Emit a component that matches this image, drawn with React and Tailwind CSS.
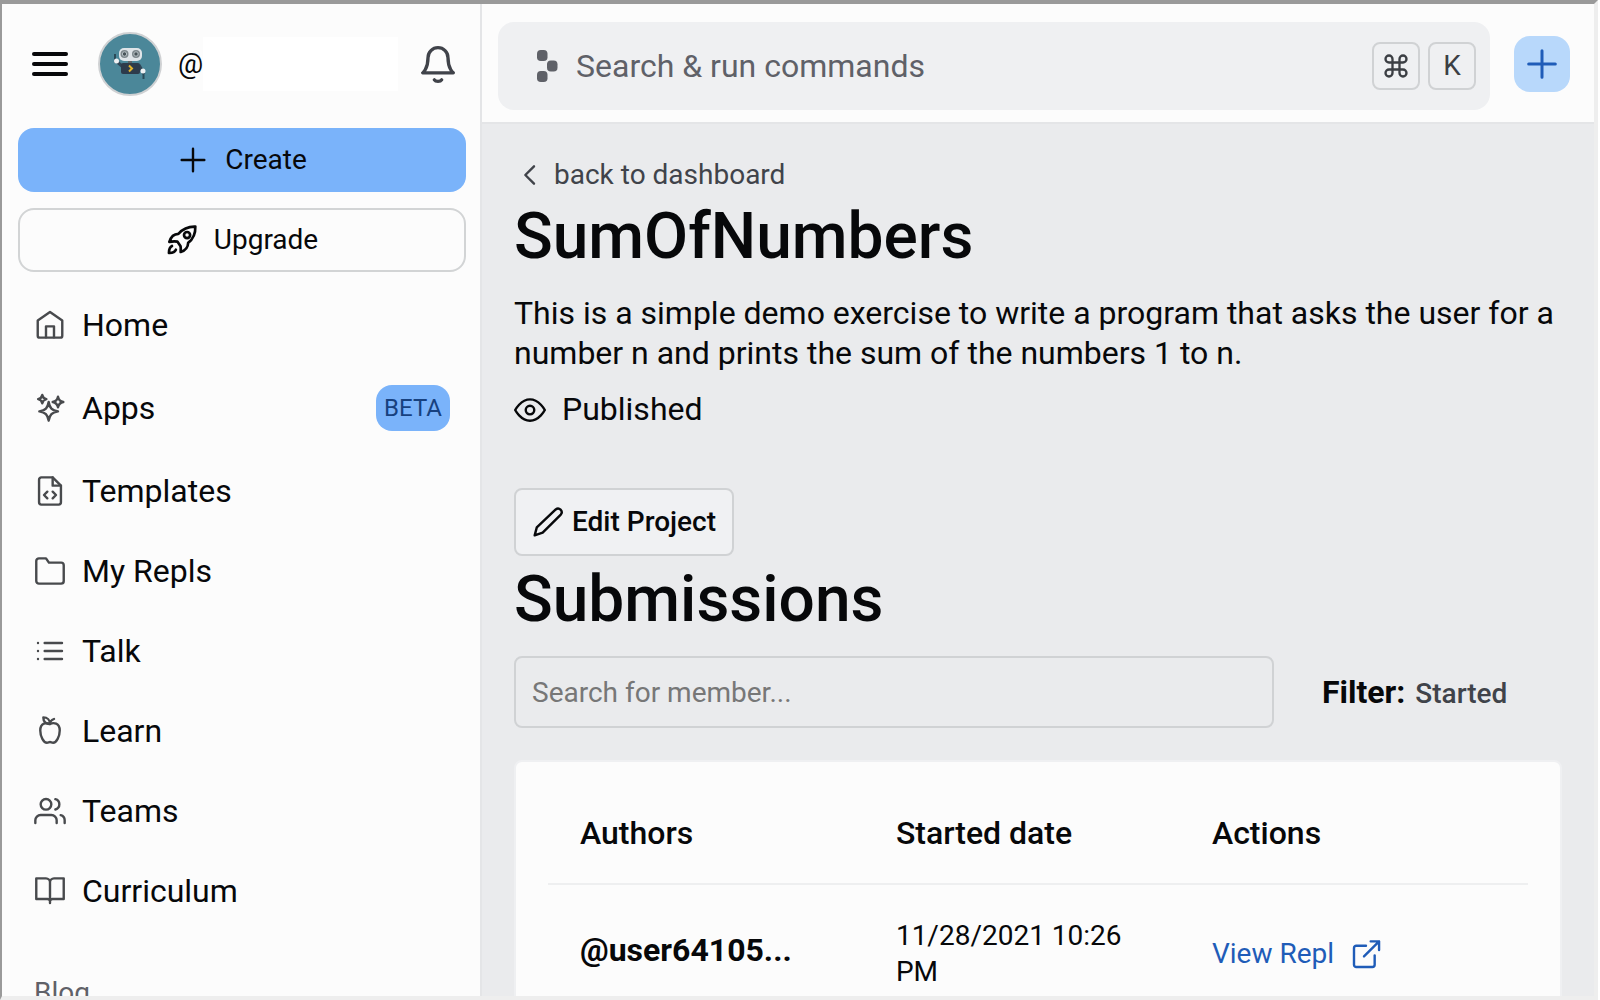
import React from "react";

function Icon({ children, className = "size-8", width = 1.8 }) {
  return (
    <svg
      viewBox="0 0 24 24"
      fill="none"
      stroke="currentColor"
      strokeWidth={width}
      strokeLinecap="round"
      strokeLinejoin="round"
      aria-hidden="true"
      className={`shrink-0 ${className}`}
    >
      {children}
    </svg>
  );
}

const navItems = [
  {
    label: "Home",
    icon: (
      <>
        <path d="M2.800 8.600L12 2.200l9.200 6.400V20a1.500 1.500 0 0 1-1.500 1.500H4.300A1.500 1.500 0 0 1 2.800 20z" />
        <path d="M9 21.200V13h6v8.200" />
      </>
    ),
  },
  {
    label: "Apps",
    badge: "BETA",
    icon: (
      <>
        <path d="M11 7.500c.8 4.600 2.400 6.200 7 7-4.600.8-6.200 2.400-7 7-.8-4.600-2.400-6.200-7-7 4.600-.8 6.200-2.400 7-7z" />
        <path d="M6.200 2.200c.4 2 1.100 2.700 3.100 3.100-2 .4-2.700 1.100-3.100 3.100-.4-2-1.100-2.700-3.100-3.100 2-.4 2.700-1.100 3.100-3.100z" />
        <path d="M18 3.500c.5 2.600 1.400 3.500 4 4-2.600.5-3.500 1.400-4 4-.5-2.600-1.400-3.500-4-4 2.600-.5 3.500-1.400 4-4z" />
      </>
    ),
  },
  {
    label: "Templates",
    icon: (
      <>
        <path d="M14 1.800H5.500A1.700 1.700 0 0 0 3.800 3.500v17a1.700 1.700 0 0 0 1.700 1.700h13a1.700 1.700 0 0 0 1.700-1.700V8z" />
        <path d="M14 1.800V8h6.200M10 12.500L7.500 15l2.500 2.500M14 12.500l2.500 2.500-2.500 2.500" />
      </>
    ),
  },
  {
    label: "My Repls",
    icon: (
      <path d="M22.300 19.500a2 2 0 0 1-2 2H3.700a2 2 0 0 1-2-2v-15a2 2 0 0 1 2-2H9l2.200 3.200h9.100a2 2 0 0 1 2 2z" />
    ),
  },
  {
    label: "Talk",
    icon: <path d="M8 6h13M8 12h13M8 18h13M3 6h.01M3 12h.01M3 18h.01" />,
  },
  {
    label: "Learn",
    icon: (
      <>
        <path d="M12 6.800C9.500 5.400 4.700 5.900 4.700 11.600c0 4.500 2.500 9.200 5 9.200 1 0 1.500-.5 2.300-.5s1.300.5 2.300.5c2.500 0 5-4.700 5-9.200 0-5.700-4.800-6.200-7.300-4.800z" />
        <path d="M12 6.800C9 7 7 5 7 1.800c3 0 5 2 5 5zM12 6.800c0-1.500 1.400-3.200 3-3.800" />
      </>
    ),
  },
  {
    label: "Teams",
    icon: (
      <>
        <path d="M17 21v-2a4 4 0 0 0-4-4H5a4 4 0 0 0-4 4v2M23 21v-2a4 4 0 0 0-3-3.870M16 3.130a4 4 0 0 1 0 7.750" />
        <circle cx="9" cy="7" r="4" />
      </>
    ),
  },
  {
    label: "Curriculum",
    icon: (
      <path d="M12 5.500a3 3 0 0 0-3-3H1.700V18H10a2 2 0 0 1 2 2.500M12 5.500a3 3 0 0 1 3-3h7.300V18H14a2 2 0 0 0-2 2.500M12 5.500V21" />
    ),
  },
];

const submissions = [{ author: "@user64105...", date: "11/28/2021 10:26 PM" }];

function Avatar() {
  return (
    <svg viewBox="0 0 64 64" className="size-16 shrink-0" role="img" aria-label="Robot avatar">
      <circle cx="32" cy="32" r="31" fill="#4b8799" stroke="#cfd1d3" strokeWidth="2" />
      <path d="M17 22v9" stroke="#2b4a58" strokeWidth="2" />
      <path d="M17 28l8 7M41 33l5 9" stroke="#2f4556" strokeWidth="3" />
      <path d="M45.500 40v7" stroke="#2b4a58" strokeWidth="2" />
      <circle cx="18.500" cy="29" r="2.500" fill="#eef1f3" />
      <circle cx="45" cy="39" r="2.500" fill="#eef1f3" />
      <rect x="30" y="27" width="4" height="5" fill="#5b6468" />
      <rect x="21" y="16" width="23" height="13" rx="5" fill="#dfe4e8" />
      <circle cx="26.500" cy="22" r="4" fill="#7d878c" />
      <circle cx="38" cy="22" r="4" fill="#7d878c" />
      <circle cx="26.500" cy="22" r="2.200" fill="#475258" stroke="#b9c2c6" strokeWidth="1" />
      <circle cx="38" cy="22" r="2.200" fill="#475258" stroke="#b9c2c6" strokeWidth="1" />
      <rect x="23" y="31" width="19" height="11" rx="2" fill="#2d3b4b" />
      <path d="M31 33.500l3 3-3 3" fill="none" stroke="#e3b52c" strokeWidth="2" />
    </svg>
  );
}

function Sidebar() {
  return (
    <aside className="flex w-[480px] shrink-0 flex-col border-r-2 border-[#e4e5e7] bg-[#fcfcfc]">
      <div className="flex h-[120px] shrink-0 items-center pr-[22px] pl-[30px]">
        <button type="button" aria-label="Menu" className="flex h-6 w-9 flex-col justify-between">
          <span className="h-1 w-full rounded-full bg-[#07080a]" />
          <span className="h-1 w-full rounded-full bg-[#07080a]" />
          <span className="h-1 w-full rounded-full bg-[#07080a]" />
        </button>
        <div className="ml-[30px] flex">
          <Avatar />
        </div>
        <span className="ml-4 w-[25px] text-[28px]">@</span>
        <span className="h-[54px] flex-1 bg-white" />
        <button type="button" aria-label="Notifications" className="ml-5 text-[#40434a]">
          <Icon className="size-10" width={2}>
            <path d="M12 2.200a6 6 0 0 0-6 6c0 6.700-3.200 9.100-3.200 9.100h18.400S18 14.900 18 8.200a6 6 0 0 0-6-6zM9.800 21.500c.8 1.200 3.600 1.200 4.400 0" />
          </Icon>
        </button>
      </div>
      <div className="flex shrink-0 flex-col gap-4 pt-1 pr-3.5 pl-4">
        <button
          type="button"
          className="flex h-16 items-center justify-center gap-4 rounded-2xl bg-[#7ab3fa] text-[28px]"
        >
          <Icon>
            <path d="M12 3.500v17M3.500 12h17" />
          </Icon>
          Create
        </button>
        <button
          type="button"
          className="flex h-16 items-center justify-center gap-4 rounded-2xl border-2 border-[#d2d4d5] text-[28px]"
        >
          <Icon width={2}>
            <path d="M8.500 13.200c-2-.4-3.800-.3-6 .300 1.200-4 3-6 6.800-6.100C12.500 3.800 16.500 1.800 22 2c.2 5.500-1.800 9.500-5.400 12.200-.1 3.800-2.100 5.600-5.600 6.800.1-2.500.2-3.800-.2-4.500z" />
            <path d="M4.500 16.500c-1.600.8-2.300 2.700-2.300 5.200 2.400.1 4.400-.5 5.200-2.400" />
            <circle cx="15.800" cy="8.300" r="2.300" />
          </Icon>
          Upgrade
        </button>
      </div>
      <nav className="mt-[13px] flex shrink-0 flex-col">
        {navItems.map((item) => (
          <a key={item.label} href="#" className="flex items-center gap-4 py-5 pr-[30px] pl-8 text-[32px] leading-10">
            <span className="flex text-[#484a4d]">
              <Icon>{item.icon}</Icon>
            </span>
            <span className="flex-1">{item.label}</span>
            {item.badge && (
              <span className="flex h-[46px] items-center rounded-2xl bg-[#7ab3fa] px-2 text-2xl text-[#17417f]">
                {item.badge}
              </span>
            )}
          </a>
        ))}
      </nav>
      <a href="#" className="mt-11 shrink-0 px-8 text-[28px] leading-9 text-[#5f6168]">
        Blog
      </a>
    </aside>
  );
}

function Header() {
  return (
    <header className="flex h-[120px] shrink-0 items-start gap-6 border-b-2 border-[#e4e5e7] bg-[#fcfcfc] pt-[18px] pr-6 pl-4">
      <button
        type="button"
        className="flex h-[88px] flex-1 items-center rounded-2xl bg-[#eff0f2] pr-[14px] pl-[38px] text-left text-[#5f6168]"
      >
        <svg viewBox="0 0 24 32" className="h-8 w-6 shrink-0" fill="currentColor" aria-hidden="true">
          <rect x="1" y="0" width="10.500" height="11" rx="3.800" />
          <rect x="11" y="10.500" width="10.500" height="11" rx="3.800" />
          <rect x="1" y="21" width="10.500" height="11" rx="3.800" />
        </svg>
        <span className="ml-4 flex-1 text-[32px]">Search &amp; run commands</span>
        <span className="flex gap-2 text-[28px] text-[#3c3f44]">
          <kbd className="flex size-12 items-center justify-center rounded-lg border-2 border-[#d0d2d4] font-[Roboto]">
            <Icon className="size-7" width={2}>
              <path d="M15 9V6a3 3 0 1 1 3 3H6a3 3 0 1 1 3-3v12a3 3 0 1 1-3-3h12a3 3 0 1 1-3 3z" />
            </Icon>
          </kbd>
          <kbd className="flex size-12 items-center justify-center rounded-lg border-2 border-[#d0d2d4] font-[Roboto]">
            K
          </kbd>
        </span>
      </button>
      <button
        type="button"
        aria-label="New"
        className="mt-3.5 flex size-14 items-center justify-center rounded-2xl bg-[#b8d8fb] text-[#1f5cb8]"
      >
        <Icon className="size-10">
          <path d="M12 4v16M4 12h16" />
        </Icon>
      </button>
    </header>
  );
}

function Project() {
  return (
    <main className="flex min-h-0 flex-1 flex-col overflow-hidden bg-[#eaebed] px-8 pt-[33px]">
      <a href="#" className="flex shrink-0 items-center gap-2 self-start text-[28px] leading-9 text-[#40434a]">
        <Icon>
          <path d="M15 5.500L8.500 12l6.500 6.500" />
        </Icon>
        back to dashboard
      </a>
      <h1 className="mt-1 shrink-0 text-[64px] leading-[80px] font-medium">SumOfNumbers</h1>
      <p className="mt-4 shrink-0 text-[32px] leading-10">
        This is a simple demo exercise to write a program that asks the user for a number n and prints the sum of the
        numbers 1 to n.
      </p>
      <p className="mt-4 flex shrink-0 items-center gap-4 text-[32px] leading-10">
        <Icon>
          <path d="M.9 12.800S5 4.800 12 4.800s11.100 8 11.100 8-4.100 8-11.100 8-11.100-8-11.100-8z" />
          <circle cx="12" cy="12.800" r="3.200" />
        </Icon>
        Published
      </p>
      <button
        type="button"
        className="mt-[59px] flex h-[68px] shrink-0 items-center gap-2 self-start rounded-lg border-2 border-[#d0d2d4] bg-[#f0f1f3] px-4 text-[28px] font-medium"
      >
        <Icon>
          <path d="M17.800 2.600a2.700 2.700 0 0 1 3.800 3.800L8 20l-6 2 1.600-6z" />
        </Icon>
        Edit Project
      </button>
      <h2 className="mt-1 shrink-0 text-[64px] leading-[80px] font-medium">Submissions</h2>
      <div className="mt-4 flex shrink-0 items-center">
        <input
          type="search"
          aria-label="Search for member"
          placeholder="Search for member..."
          className="h-[72px] min-w-0 flex-1 rounded-lg border-2 border-[#d0d2d4] bg-transparent px-4 text-[28px] placeholder:text-[#777777]"
        />
        <button type="button" className="mr-12 ml-12 flex w-48 items-baseline gap-2.5 text-[32px] font-bold">
          Filter: <span className="text-[28px] font-medium text-[#40434a]">Started</span>
        </button>
      </div>
      <section className="mt-8 shrink-0 grow rounded-lg border-2 border-[#eff0f2] bg-[#fcfcfc] px-8 pt-8">
        <table className="w-full table-fixed border-collapse text-left">
          <colgroup>
            <col className="w-[35.5%]" />
            <col />
            <col />
          </colgroup>
          <thead>
            <tr className="h-[90px] border-b-2 border-[#eeeff0] text-[32px]">
              <th className="pb-3 pl-8 font-medium">Authors</th>
              <th className="pb-3 font-medium">Started date</th>
              <th className="pb-3 font-medium">Actions</th>
            </tr>
          </thead>
          <tbody>
            {submissions.map((row) => (
              <tr key={row.author} className="h-[138px]">
                <td className="pb-2 pl-8 text-[32px] font-bold">{row.author}</td>
                <td className="pr-16 text-[28px] leading-9">{row.date}</td>
                <td className="text-[28px]">
                  <a href="#" className="flex items-center gap-4 text-[#1f5cb8]">
                    View Repl
                    <Icon>
                      <path d="M18.500 13v7a1.700 1.700 0 0 1-1.700 1.700h-12A1.700 1.700 0 0 1 3 20V7.500a1.700 1.700 0 0 1 1.700-1.700H12M15.500 2.500h6.300V9M21.800 2.500L10.500 13.800" />
                    </Icon>
                  </a>
                </td>
              </tr>
            ))}
          </tbody>
        </table>
      </section>
    </main>
  );
}

export default function App() {
  return (
    <div className="h-screen bg-white pr-0.5 font-[Roboto,sans-serif] text-[#07080a]">
      <div className="flex h-full overflow-hidden border-t-4 border-r-4 border-b-4 border-l-2 border-t-[#9a9a9a] border-r-[#eeeeee] border-b-[#eeeeee] border-l-[#9a9a9a]">
        <Sidebar />
        <div className="flex min-w-0 flex-1 flex-col">
          <Header />
          <Project />
        </div>
      </div>
    </div>
  );
}
